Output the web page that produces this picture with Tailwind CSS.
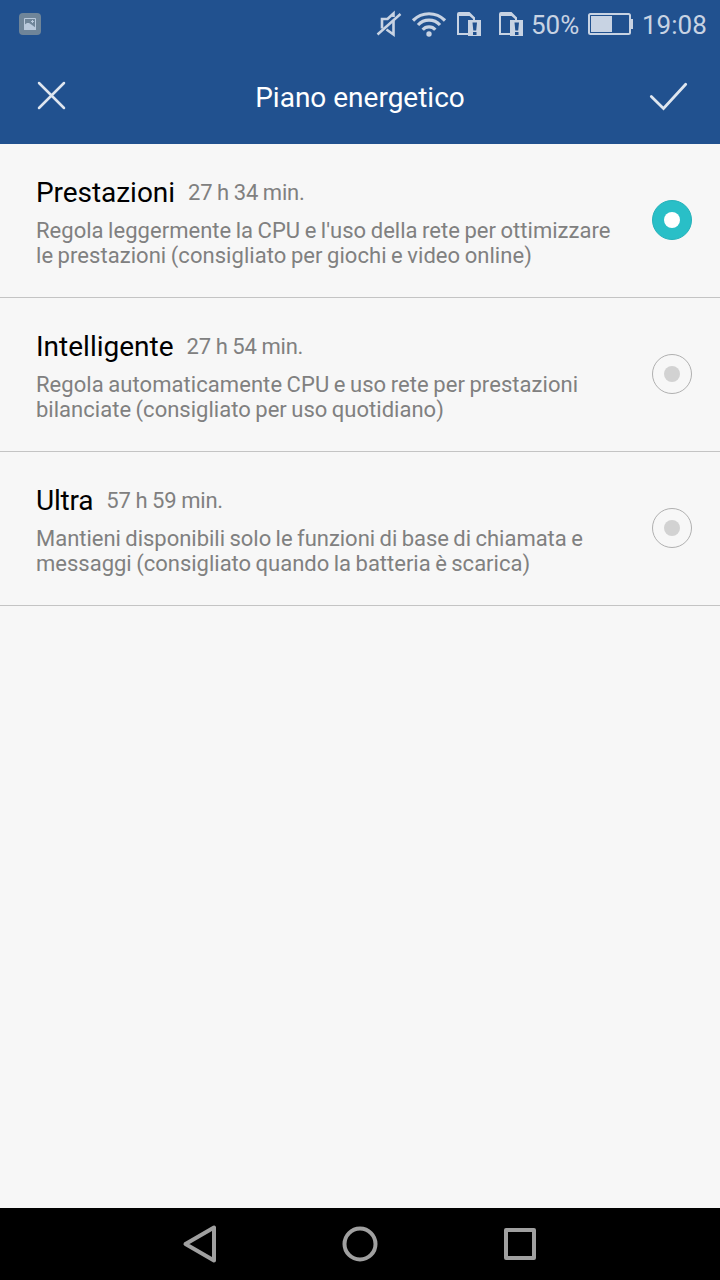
<!DOCTYPE html>
<html lang="it">
<head>
    <meta charset="UTF-8">
    <title>Piano energetico</title>
    <meta name="viewport" content="width=device-width, initial-scale=1.0">
    <script src="https://cdn.jsdelivr.net/npm/@tailwindcss/browser@4"></script>
</head>
<body class="bg-[#f7f7f7] h-[1280px] flex flex-col overflow-hidden font-[Roboto,sans-serif]">

    <header class="bg-[#21518f] h-36 shrink-0 text-[#c8d3e3]">
        <!-- Status bar -->
        <div class="h-12 pl-[18px] pr-3 flex items-center">
            <svg class="w-6 h-6" viewBox="0 0 24 24">
                <rect x="1" y="1" width="22" height="22" rx="4" fill="#6f8599"/>
                <path d="M6.5 6.5h11v11h-11z" fill="none" stroke="#b9c9dc"/>
                <path d="M6 13l3-2h2l3 2 4 3v2H6z" fill="#b9c9dc"/>
                <path d="M14.500 8v3M13 9.500h3" stroke="#b9c9dc"/>
            </svg>

            <svg class="w-[26px] h-7 ml-auto" viewBox="376 10 26 28" fill="none" stroke="currentColor" stroke-width="2.600">
                <path d="M393.500 17V13.500L387.500 19H382V28.500"/>
                <path d="M386.500 29.500l7 5V20.500"/>
                <path d="M377.500 34.500L400.500 14" stroke-width="2.500"/>
            </svg>
            <svg class="w-9 h-7 ml-[9px]" viewBox="411 10 36 28" fill="none" stroke="currentColor" stroke-width="3.200">
                <path d="M413 20.500C422 11.500 436 11.500 445 20.500"/>
                <path d="M418 25C424 18.500 434 18.500 440 25"/>
                <path d="M422.700 29.700C426 25.800 432 25.800 435.300 29.700"/>
                <circle cx="429" cy="34" r="2.700" fill="currentColor" stroke="none"/>
            </svg>
            <svg class="w-[26px] h-7 ml-[9px]" viewBox="456 10 26 28">
                <path d="M458 34V16M457 34h12M474 20v-2.500" fill="none" stroke="currentColor" stroke-width="2"/>
                <path d="M457 16v-2q0-2 2-2h10.500l5.500 5.500V19h-2l-3.500-3z" fill="currentColor"/>
                <path d="M468 20h13v16H468z" fill="currentColor"/>
                <path d="M472.500 22.500h4.500l-.8 8h-2.900zM473 32h3.500v3H473z" fill="#21518f"/>
            </svg>
            <svg class="w-[26px] h-7 ml-4" viewBox="456 10 26 28">
                <path d="M458 34V16M457 34h12M474 20v-2.500" fill="none" stroke="currentColor" stroke-width="2"/>
                <path d="M457 16v-2q0-2 2-2h10.500l5.500 5.500V19h-2l-3.500-3z" fill="currentColor"/>
                <path d="M468 20h13v16H468z" fill="currentColor"/>
                <path d="M472.500 22.500h4.500l-.8 8h-2.900zM473 32h3.500v3H473z" fill="#21518f"/>
            </svg>
            <span class="ml-[7px] w-[49px] text-[26px] leading-8 whitespace-nowrap mt-0.5">50%</span>
            <svg class="w-[46px] h-[22px] ml-2" viewBox="0 0 46 22">
                <rect x="1" y="1" width="41" height="20" rx="1.500" fill="none" stroke="currentColor" stroke-width="2"/>
                <path d="M3 3h21v16H3zM43 6h2v10h-2z" fill="currentColor"/>
            </svg>
            <span class="ml-2 w-[66px] text-[26px] leading-8 whitespace-nowrap mt-0.5">19:08</span>
        </div>

        <!-- Action bar -->
        <div class="h-24 pl-9 pr-8 flex items-center justify-between text-[#dfe6ef]">
            <svg class="w-8 h-8" viewBox="36 80 32 32" fill="none" stroke="currentColor" stroke-width="2.500" stroke-linecap="round">
                <path d="M39 83l25 25M64 83L39 108"/>
            </svg>
            <h1 class="text-[28px] leading-9 text-white mt-1 ml-1">Piano energetico</h1>
            <svg class="w-10 h-8" viewBox="648 80 40 32" fill="none" stroke="currentColor" stroke-width="2.800" stroke-linecap="round">
                <path d="M651.300 96.500L663.500 108.500L685.700 84.300"/>
            </svg>
        </div>
    </header>

    <!-- Power plans -->
    <main class="grow">
        <div class="h-[154px] pl-9 pr-7 pt-[31px] border-b border-[#c4c4c4] flex items-start justify-between">
            <div>
                <div class="flex items-start h-9">
                    <h2 class="text-[28px] leading-9 text-black tracking-[-0.05px]">Prestazioni</h2>
                    <span class="ml-[13px] text-[22px] leading-9 text-[#808080] [word-spacing:-0.5px] tracking-[-0.2px]">27 h 34 min.</span>
                </div>
                <p class="mt-[7px] text-[22px] leading-[25px] text-[#808080] whitespace-nowrap [word-spacing:-1px]"><span class="tracking-[0.03px]">Regola leggermente la CPU e l'uso della rete per ottimizzare</span><br><span class="tracking-[0.05px]">le prestazioni (consigliato per giochi e video online)</span></p>
            </div>
            <div class="w-10 h-10 mt-[25px] rounded-full bg-[#29bfc7] border border-[#25b2ba] flex items-center justify-center">
                <div class="w-4 h-4 rounded-full bg-white"></div>
            </div>
        </div>

        <div class="h-[154px] pl-9 pr-7 pt-[31px] border-b border-[#c4c4c4] flex items-start justify-between">
            <div>
                <div class="flex items-start h-9">
                    <h2 class="text-[28px] leading-9 text-black">Intelligente</h2>
                    <span class="ml-[13px] text-[22px] leading-9 text-[#808080] [word-spacing:-0.5px] tracking-[-0.2px]">27 h 54 min.</span>
                </div>
                <p class="mt-[7px] text-[22px] leading-[25px] text-[#808080] whitespace-nowrap [word-spacing:-1px]"><span class="tracking-[0.06px]">Regola automaticamente CPU e uso rete per prestazioni</span><br><span class="tracking-[0.02px]">bilanciate (consigliato per uso quotidiano)</span></p>
            </div>
            <div class="w-10 h-10 mt-[25px] rounded-full border border-[#b0b0b0] flex items-center justify-center">
                <div class="w-4 h-4 rounded-full bg-[#d2d2d2]"></div>
            </div>
        </div>

        <div class="h-[154px] pl-9 pr-7 pt-[31px] border-b border-[#c4c4c4] flex items-start justify-between">
            <div>
                <div class="flex items-start h-9">
                    <h2 class="text-[28px] leading-9 text-black tracking-[-0.2px]">Ultra</h2>
                    <span class="ml-[13px] text-[22px] leading-9 text-[#808080] [word-spacing:-0.5px] tracking-[-0.2px]">57 h 59 min.</span>
                </div>
                <p class="mt-[7px] text-[22px] leading-[25px] text-[#808080] whitespace-nowrap [word-spacing:-1px]"><span class="tracking-[-0.02px]">Mantieni disponibili solo le funzioni di base di chiamata e</span><br>messaggi (consigliato quando la batteria è scarica)</p>
            </div>
            <div class="w-10 h-10 mt-[25px] rounded-full border border-[#b0b0b0] flex items-center justify-center">
                <div class="w-4 h-4 rounded-full bg-[#d2d2d2]"></div>
            </div>
        </div>
    </main>

    <!-- Navigation bar -->
    <nav class="h-[72px] shrink-0 bg-black text-[#a0a0a0] flex items-center justify-center gap-[120px]">
        <svg class="w-10 h-10" viewBox="180 1224 40 40" fill="none" stroke="currentColor" stroke-width="4" stroke-linejoin="round">
            <path d="M185.500 1244L214 1227.500V1260.500z"/>
        </svg>
        <svg class="w-10 h-10" viewBox="0 0 40 40" fill="none" stroke="currentColor" stroke-width="4">
            <circle cx="20" cy="20" r="15.500"/>
        </svg>
        <svg class="w-10 h-10" viewBox="0 0 40 40" fill="none" stroke="currentColor" stroke-width="4" stroke-linejoin="round">
            <path d="M6 6h28v28H6z"/>
        </svg>
    </nav>

</body>
</html>
